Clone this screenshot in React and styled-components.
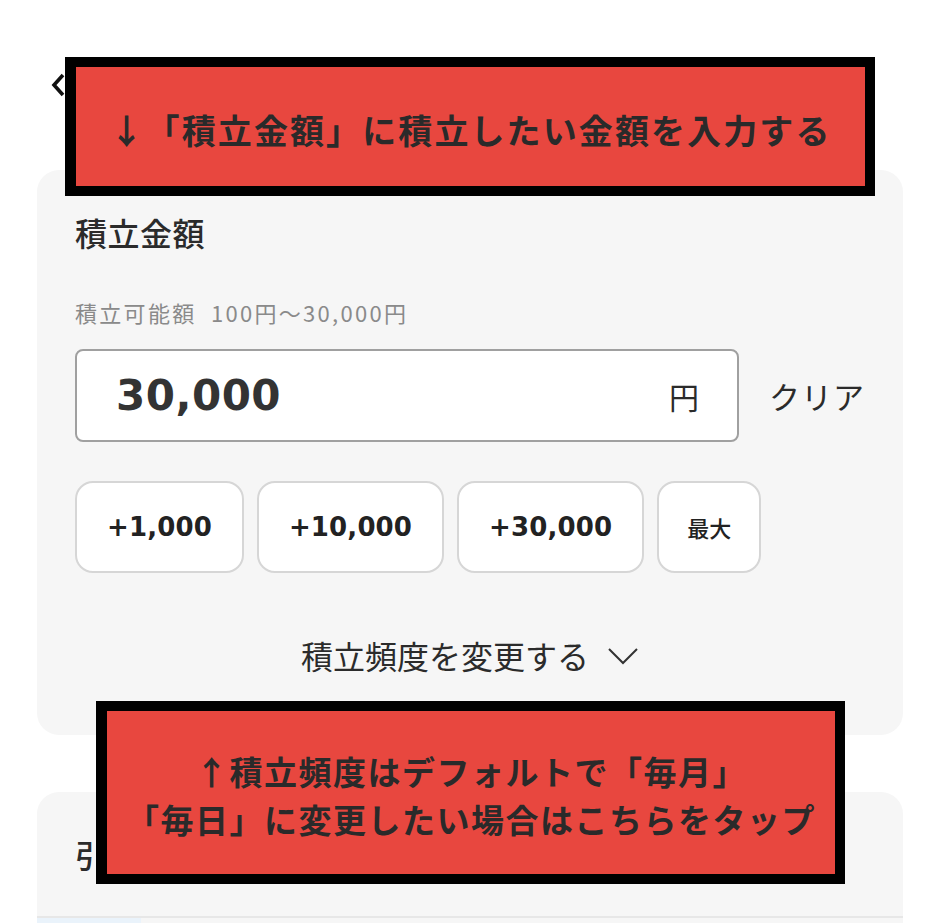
import React from "react";
import styled, { createGlobalStyle } from "styled-components";

const GlobalStyle = createGlobalStyle`
  html, body {
    margin: 0;
    padding: 0;
    background: #fff;
  }
  body {
    font-family: "Noto Sans CJK JP", "Noto Sans", sans-serif;
    color: #2f2f2f;
  }
`;

const amounts = ["+1,000", "+10,000", "+30,000"];

const App = () => {
  return (
    <>
      <GlobalStyle />
      <Page>
        <Header>
          <svg width="16" height="24" viewBox="0 0 16 24">
            <path d="M13 2 L4 12 L13 22" fill="none" stroke="#111" strokeWidth="3.6" />
          </svg>
        </Header>

        <Card>
          <Title>積立金額</Title>
          <Hint>積立可能額&nbsp;&nbsp;100円〜30,000円</Hint>
          <InputRow>
            <AmountBox>
              <AmountValue>30,000</AmountValue>
              <Unit>円</Unit>
            </AmountBox>
            <ClearButton>クリア</ClearButton>
          </InputRow>
          <ChipRow>
            {amounts.map((a) => (
              <Chip key={a}>{a}</Chip>
            ))}
            <Chip small>最大</Chip>
          </ChipRow>
          <FrequencyToggle>
            積立頻度を変更する
            <svg width="32" height="18" viewBox="0 0 32 18">
              <path d="M2 2 L16 16 L30 2" fill="none" stroke="#333" strokeWidth="2" />
            </svg>
          </FrequencyToggle>
        </Card>

        <Card second>
          <Title>引落方法</Title>
          <Divider />
          <TabRow>
            <TabStub />
          </TabRow>
        </Card>

        <Callout top>
          ↓「積立金額」に積立したい金額を入力する
        </Callout>
        <Callout bottom>
          ↑積立頻度はデフォルトで「毎月」
          <br />
          「毎日」に変更したい場合はこちらをタップ
        </Callout>
      </Page>
    </>
  );
};

const Page = styled.div`
  position: relative;
  width: 941px;
  height: 923px;
  overflow: hidden;
  padding: 0 38px 0 37px;
  box-sizing: border-box;
`;

const Header = styled.div`
  height: 170px;
  padding: 73px 0 0 13px;
  box-sizing: border-box;
`;

const Card = styled.div`
  background: #f6f6f6;
  border-radius: 22px;
  padding: ${(p) => (p.second ? "40px 0 0 38px" : "40px 30px 58px 38px")};
  margin-top: ${(p) => (p.second ? "57px" : "0")};
  height: ${(p) => (p.second ? "200px" : "auto")};
  overflow: hidden;
`;

const Title = styled.div`
  font-size: 32px;
  font-weight: 500;
  line-height: 44px;
  letter-spacing: 0.5px;
  color: #2b2b2b;
`;

const Hint = styled.div`
  margin-top: 43px;
  font-size: 22px;
  line-height: 30px;
  letter-spacing: 2.3px;
  color: #8a8a8a;
`;

const InputRow = styled.div`
  margin-top: 22px;
  display: flex;
  align-items: center;
  gap: 30px;
`;

const AmountBox = styled.div`
  flex: 0 0 664px;
  height: 93px;
  box-sizing: border-box;
  background: #fff;
  border: 2px solid #a0a0a0;
  border-radius: 8px;
  display: flex;
  align-items: center;
  justify-content: space-between;
  padding: 0 38px 0 39px;
`;

const AmountValue = styled.span`
  font-family: "DejaVu Sans", sans-serif;
  font-weight: bold;
  font-size: 42px;
  color: #333;
  letter-spacing: 0.5px;
`;

const Unit = styled.span`
  font-size: 30px;
  color: #2b2b2b;
`;

const ClearButton = styled.span`
  flex-shrink: 0;
  white-space: nowrap;
  font-size: 31px;
  color: #2b2b2b;
  letter-spacing: 1px;
`;

const ChipRow = styled.div`
  margin-top: 39px;
  display: flex;
  gap: 13px;
`;

const Chip = styled.div`
  height: 92px;
  box-sizing: border-box;
  background: #fff;
  border: 2px solid #d6d6d6;
  border-radius: 18px;
  padding: 0 ${(p) => (p.small ? "28px" : "30px")};
  display: flex;
  align-items: center;
  font-family: ${(p) =>
    p.small ? `"Noto Sans CJK JP", sans-serif` : `"DejaVu Sans", sans-serif`};
  font-weight: ${(p) => (p.small ? 500 : "bold")};
  font-size: ${(p) => (p.small ? "22px" : "26px")};
  letter-spacing: ${(p) => (p.small ? "0" : "0.15px")};
  color: #222;
`;

const FrequencyToggle = styled.div`
  margin-top: 60px;
  margin-right: 8px;
  display: flex;
  justify-content: center;
  align-items: center;
  gap: 18px;
  font-size: 32px;
  line-height: 44px;
  color: #2b2b2b;
  svg {
    margin-top: 2px;
  }
`;

const Divider = styled.div`
  margin: 40px 0 0 -38px;
  border-top: 2px solid #e7e7e7;
`;

const TabRow = styled.div`
  margin-left: -38px;
  display: flex;
`;

const TabStub = styled.div`
  width: 104px;
  height: 20px;
  background: #eaf3fb;
`;

const Callout = styled.div`
  position: absolute;
  left: ${(p) => (p.top ? "65px" : "96px")};
  top: ${(p) => (p.top ? "57px" : "701px")};
  width: ${(p) => (p.top ? "810px" : "749px")};
  height: ${(p) => (p.top ? "139px" : "183px")};
  box-sizing: border-box;
  border: 10px solid #000;
  border-left-width: 11px;
  background: #e8473f;
  display: flex;
  align-items: center;
  justify-content: center;
  text-align: center;
  font-family: "Noto Sans CJK JP", sans-serif;
  font-weight: bold;
  font-size: ${(p) => (p.top ? "34px" : "33px")};
  line-height: 48px;
  letter-spacing: ${(p) => (p.top ? "2.1px" : "1.5px")};
  color: #2a2a2a;
  padding-top: ${(p) => (p.top ? "6px" : "4px")};
`;

export default App;
